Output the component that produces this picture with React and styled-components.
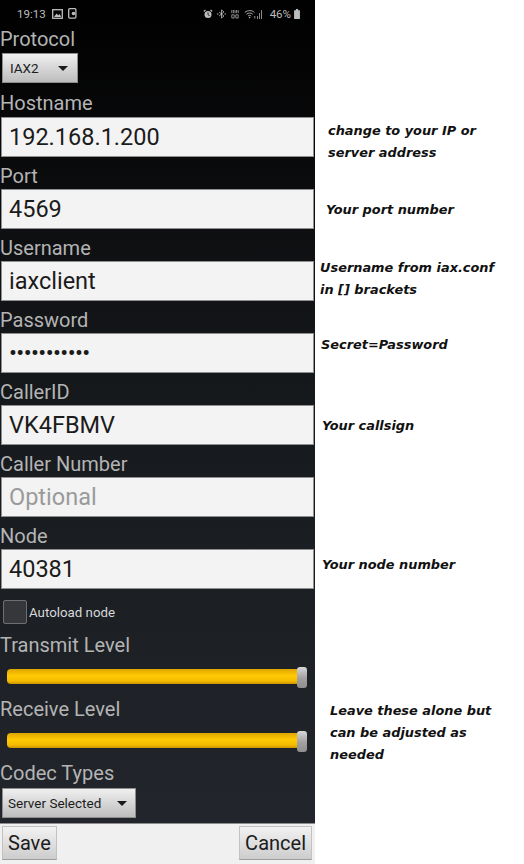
import React from "react";
import styled, { createGlobalStyle } from "styled-components";

const GlobalStyle = createGlobalStyle`
  html, body {
    margin: 0;
    padding: 0;
    background: #fff;
  }
`;

const Page = styled.div`
  width: 524px;
  height: 864px;
  display: flex;
  overflow: hidden;
`;

const Phone = styled.div`
  width: 315px;
  height: 864px;
  flex-shrink: 0;
  display: flex;
  flex-direction: column;
  background: linear-gradient(#000 0, #0c0d0f 200px, #16191c 400px, #22262c 820px);
  font-family: Roboto, "Liberation Sans", sans-serif;
`;

const StatusBar = styled.div`
  height: 27px;
  flex-shrink: 0;
  display: flex;
  align-items: center;
  padding: 0 15px 0 17px;
  box-sizing: border-box;
  color: #bdbdbd;
  font-size: 11.5px;
`;

const StatusTime = styled.span`
  margin-right: 6px;
`;

const StatusRight = styled.div`
  margin-left: auto;
  display: flex;
  align-items: center;
`;

const BatteryText = styled.span`
  margin-left: 8px;
`;

const StatusIcon = styled.svg`
  display: block;
  margin-left: ${(p) => p.$gap || 0}px;
`;

const Form = styled.div`
  flex: 1;
  display: flex;
  flex-direction: column;
  align-items: flex-start;
`;

const Label = styled.div`
  height: ${(p) => p.$height || 32}px;
  width: 100%;
  padding: ${(p) => p.$top ?? 6}px 0 ${(p) => p.$bottom || 0}px 0;
  box-sizing: border-box;
  display: flex;
  align-items: center;
  font-size: 20px;
  color: #b4b4b4;
`;

const Select = styled.div`
  width: ${(p) => p.$width}px;
  height: 30px;
  margin-left: 2px;
  flex-shrink: 0;
  display: flex;
  align-items: center;
  justify-content: space-between;
  box-sizing: border-box;
  padding: 0 ${(p) => p.$pad}px 0 ${(p) => p.$left}px;
  background: linear-gradient(#f0f0f0, #bdbdbd);
  border: 1px solid #8e8e8e;
  color: #1c1c1c;
  font-size: 13.5px;
`;

const Caret = styled.span`
  width: 0;
  height: 0;
  border-left: 5px solid transparent;
  border-right: 5px solid transparent;
  border-top: 5px solid #1a1a1a;
`;

const Input = styled.div`
  width: 313px;
  height: 40px;
  margin-left: 1px;
  flex-shrink: 0;
  box-sizing: border-box;
  display: flex;
  align-items: center;
  padding-left: 7px;
  background: #f3f3f3;
  border: 1px solid #8f8f8f;
  font-size: 23.5px;
  color: ${(p) => (p.$placeholder ? "#9a9a9a" : "#1b1b1b")};
  letter-spacing: ${(p) => (p.$dots ? "-0.6px" : "0")};
`;

const CheckRow = styled.div`
  display: flex;
  align-items: center;
  height: 26px;
  margin-top: 10px;
  padding-left: 3px;
  gap: 2px;
  color: #d8d8d8;
  font-size: 13.3px;
`;

const CheckBox = styled.span`
  width: 22px;
  height: 22px;
  border: 1px solid #6c6e70;
  border-radius: 2px;
  background: #35373a;
`;

const SliderRow = styled.div`
  width: 100%;
  height: ${(p) => p.$height}px;
  padding: 0 7px;
  box-sizing: border-box;
  display: flex;
  align-items: center;
`;

const Track = styled.div`
  position: relative;
  width: 300px;
  height: 15px;
  border-radius: 4px;
  background: linear-gradient(#e0a600, #ffca05 45%, #f5bb00 80%, #c99400);
`;

const Thumb = styled.span`
  position: absolute;
  right: 0;
  top: -2px;
  width: 10px;
  height: 21px;
  border-radius: 3px;
  background: linear-gradient(#d8d8d8, #a0a0a0 55%, #8f8f8f);
`;

const BottomBar = styled.div`
  height: 41px;
  flex-shrink: 0;
  display: flex;
  justify-content: space-between;
  padding: 2px 3px 4px 2px;
  box-sizing: border-box;
  background: #f0f0f0;
  border-top: 1px solid #8d8d8d;
`;

const BarButton = styled.div`
  display: flex;
  align-items: center;
  padding: 0 5px;
  background: linear-gradient(#f2f2f2, #cdcdcd);
  border: 1px solid #c2c2c2;
  border-bottom-color: #9c9c9c;
  font-size: 20px;
  color: #1c1c1c;
`;

const Notes = styled.div`
  flex: 1;
  display: flex;
  flex-direction: column;
  font-family: "DejaVu Sans", sans-serif;
  font-style: oblique;
  font-weight: 700;
  font-size: 12.9px;
  line-height: 22px;
  color: #111;
`;

const Note = styled.div`
  margin-top: ${(p) => p.$gap}px;
  margin-left: ${(p) => p.$left}px;
  white-space: pre-line;
`;

const LeftIcons = () => (
  <>
    <StatusIcon width="11" height="10" viewBox="0 0 11 10">
      <rect x="0.7" y="0.7" width="9.6" height="8.6" fill="none" stroke="#bdbdbd" strokeWidth="1.3" />
      <path d="M2 8l2.5-3.5 1.7 1.7 1.5-1.2L9.2 8z" fill="#bdbdbd" />
    </StatusIcon>
    <StatusIcon $gap={5} width="9" height="11" viewBox="0 0 9 11">
      <rect x="0.7" y="0.7" width="7.2" height="9.4" rx="1" fill="none" stroke="#bdbdbd" strokeWidth="1.3" />
      <circle cx="5.5" cy="5.5" r="1.8" fill="#bdbdbd" />
    </StatusIcon>
  </>
);

const RightIcons = () => (
  <StatusRight>
    <StatusIcon width="10" height="10" viewBox="0 0 12 12">
      <circle cx="6" cy="6.5" r="4.2" fill="#bdbdbd" />
      <path d="M1 3l2-2M11 3L9 1" stroke="#bdbdbd" strokeWidth="1.4" />
      <path d="M6 4v3l2 1" stroke="#111" fill="none" />
    </StatusIcon>
    <StatusIcon $gap={4} width="9" height="10" viewBox="0 0 11 12">
      <path d="M2.5 3.5l6 5L5.5 11V1l3 2.5-6 5" fill="none" stroke="#bdbdbd" />
      <circle cx="1" cy="6" r="0.8" fill="#bdbdbd" />
      <circle cx="10" cy="6" r="0.8" fill="#bdbdbd" />
    </StatusIcon>
    <StatusIcon $gap={5} width="8" height="10" viewBox="0 0 10 12">
      <path d="M1 1v4M3 1v4M5 1v4M7 1v4M9 1v4M1 7h3v4H1zM6 7h3v4H6z" stroke="#bdbdbd" fill="none" strokeWidth="0.9" />
    </StatusIcon>
    <StatusIcon $gap={5} width="12" height="10" viewBox="0 0 15 11">
      <path d="M1 3.5c3.6-3 9-3 12 0M3 5.8c2.4-2 5.8-2 8 0M5 8c1.2-1 2.8-1 4 0" fill="none" stroke="#bdbdbd" strokeWidth="1.1" />
      <circle cx="7" cy="9.8" r="1" fill="#bdbdbd" />
      <path d="M13 8h1v3h-1z" fill="#bdbdbd" />
    </StatusIcon>
    <StatusIcon $gap={1} width="5" height="10" viewBox="0 0 5 10">
      <path d="M0.5 7v3M2.5 4v6M4.5 1v9" stroke="#8a8a8a" strokeWidth="1" />
    </StatusIcon>
    <BatteryText>46%</BatteryText>
    <StatusIcon $gap={3} width="6" height="10" viewBox="0 0 7 12">
      <path d="M2.2 0h2.6v1.5H7V12H0V1.5h2.2z" fill="#bdbdbd" />
    </StatusIcon>
  </StatusRight>
);

const fields = [
  { label: "Hostname", value: "192.168.1.200", height: 34 },
  { label: "Port", value: "4569" },
  { label: "Username", value: "iaxclient" },
  { label: "Password", value: "•••••••••••", dots: true },
  { label: "CallerID", value: "VK4FBMV" },
  { label: "Caller Number", value: "Optional", placeholder: true },
  { label: "Node", value: "40381" },
];

const notes = [
  { text: "change to your IP or\nserver address", gap: 120, left: 13 },
  { text: "Your port number", gap: 35, left: 11 },
  { text: "Username from iax.conf\nin [] brackets", gap: 36, left: 5 },
  { text: "Secret=Password", gap: 33, left: 6 },
  { text: "Your callsign", gap: 59, left: 7 },
  { text: "Your node number", gap: 117, left: 7 },
  { text: "Leave these alone but\ncan be adjusted as\nneeded", gap: 124, left: 15 },
];

const App = () => (
  <Page>
    <GlobalStyle />
    <Phone>
      <StatusBar>
        <StatusTime>19:13</StatusTime>
        <LeftIcons />
        <RightIcons />
      </StatusBar>
      <Form>
        <Label $height={26} $top={0} $bottom={2}>Protocol</Label>
        <Select $width={76} $left={7} $pad={9}>
          IAX2
          <Caret />
        </Select>
        {fields.map((f) => (
          <React.Fragment key={f.label}>
            <Label $height={f.height}>{f.label}</Label>
            <Input $placeholder={f.placeholder} $dots={f.dots}>
              {f.value}
            </Input>
          </React.Fragment>
        ))}
        <CheckRow>
          <CheckBox />
          Autoload node
        </CheckRow>
        <Label $height={34}>Transmit Level</Label>
        <SliderRow $height={34}>
          <Track>
            <Thumb />
          </Track>
        </SliderRow>
        <Label $height={32} $top={0}>Receive Level</Label>
        <SliderRow $height={30}>
          <Track>
            <Thumb />
          </Track>
        </SliderRow>
        <Label $height={33} $top={3}>Codec Types</Label>
        <Select $width={134} $left={5} $pad={8}>
          Server Selected
          <Caret />
        </Select>
      </Form>
      <BottomBar>
        <BarButton>Save</BarButton>
        <BarButton>Cancel</BarButton>
      </BottomBar>
    </Phone>
    <Notes>
      {notes.map((n) => (
        <Note key={n.text} $gap={n.gap} $left={n.left}>
          {n.text}
        </Note>
      ))}
    </Notes>
  </Page>
);

export default App;
